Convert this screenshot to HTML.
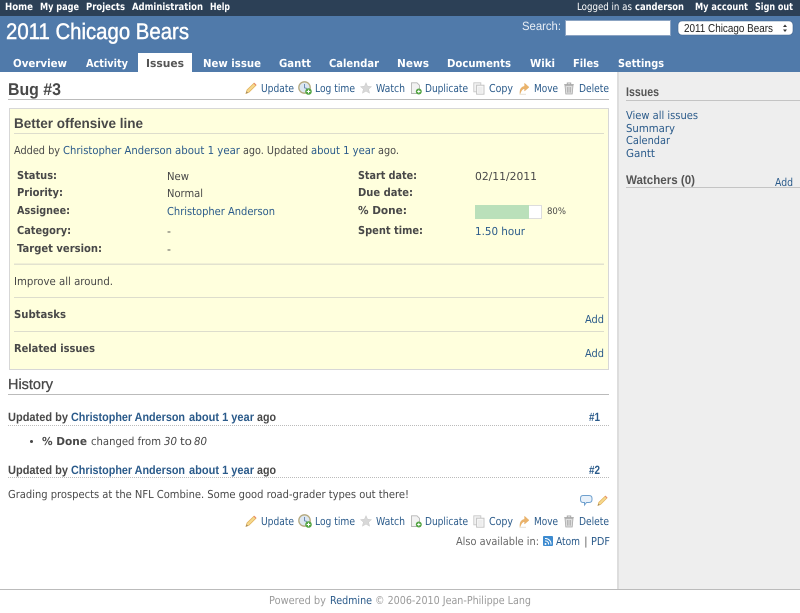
<!DOCTYPE html>
<html><head><meta charset="utf-8"><title>Bug #3</title>
<style>
html,body{margin:0;padding:0;background:#fff;width:800px;height:613px;overflow:hidden}
svg{display:block}
text{font-family:"DejaVu Sans",Verdana,sans-serif;font-size:11px;fill:#484848;white-space:pre;text-rendering:geometricPrecision}
.l{fill:#2A5A8A}
.b{font-weight:bold}
.t{fill:#fff;font-weight:bold;font-size:10px}
.m{fill:#fff;font-weight:bold;font-size:11px}
.h{font-family:"Liberation Sans",Arial,sans-serif;font-weight:bold}
.k{fill:#484848;font-weight:bold}
.u{font-family:"Liberation Sans",Arial,sans-serif;font-weight:bold;font-size:12px;fill:#484848}
.ul{font-family:"Liberation Sans",Arial,sans-serif;font-weight:bold;font-size:12px;fill:#2A5A8A}
</style></head><body>
<svg width="800" height="613" viewBox="0 0 800 613" xmlns="http://www.w3.org/2000/svg">
<defs>
<symbol id="pen" viewBox="0 0 12 12"><path d="M1 11.5 L2 8 L9 1.2 L11 3.2 L4 10.2 Z" fill="#F6D98E" stroke="#E3B25C" stroke-width=".8"/><path d="M8.6 1.6 L9.4 .8 L11.4 2.8 L10.6 3.6 Z" fill="#E88A6A"/><path d="M1 11.5 L1.6 9.4 L3 10.8 Z" fill="#8f8068"/></symbol>
<symbol id="clk" viewBox="0 0 14 14"><circle cx="6.5" cy="6.5" r="5.7" fill="#DCE6F0" stroke="#B5A97E" stroke-width="1.3"/><path d="M6.5 3 V6.8 L9 7.5" fill="none" stroke="#6C8DB3" stroke-width="1"/><circle cx="10.5" cy="10.5" r="3.3" fill="#54A544"/><path d="M10.5 8.7 V12.3 M8.7 10.5 H12.3" stroke="#fff" stroke-width="1"/></symbol>
<symbol id="star" viewBox="0 0 12 12"><path d="M6 .6 L7.6 4.3 L11.6 4.6 L8.6 7.2 L9.6 11.2 L6 9.1 L2.4 11.2 L3.4 7.2 L.4 4.6 L4.4 4.3 Z" fill="#D8D8D8" stroke="#C8C8C8" stroke-width=".5"/></symbol>
<symbol id="dup" viewBox="0 0 12 13"><path d="M1.5 .8 H7 L9.5 3.3 V11.5 H1.5 Z" fill="#F2F2F2" stroke="#B5B5B5" stroke-width=".9"/><circle cx="8.8" cy="9.5" r="3" fill="#54A544"/><path d="M8.8 7.9 V11.1 M7.2 9.5 H10.4" stroke="#fff" stroke-width=".9"/></symbol>
<symbol id="copy" viewBox="0 0 12 13"><rect x=".8" y=".8" width="7" height="9" fill="#F2F2F2" stroke="#C8C8C8" stroke-width=".9"/><rect x="3.6" y="3.2" width="7.4" height="9" fill="#F7F7F7" stroke="#C0C0C0" stroke-width=".9"/><path d="M5 6 H9.5 M5 8 H9.5 M5 10 H9.5" stroke="#DDD" stroke-width=".7"/></symbol>
<symbol id="mv" viewBox="0 0 12 13"><path d="M2 12 C1.5 7 3.5 4.6 6.6 4.4 V1.2 L11 5.2 L6.6 9 V6.6 C4.5 6.8 3.2 8.6 2 12 Z" fill="#EBB36B" stroke="#E0A455" stroke-width=".4"/><path d="M1.5 12.3 H8" stroke="#E5E0D5" stroke-width="1"/></symbol>
<symbol id="tr" viewBox="0 0 12 13"><path d="M1.2 2.6 H10.8 M4.3 2.4 V1 H7.7 V2.4" fill="none" stroke="#A8A8A8" stroke-width="1"/><path d="M2 3.4 H10 L9.2 12 H2.8 Z" fill="#DEDEDE" stroke="#A8A8A8" stroke-width=".8"/><path d="M4.4 5 V10.6 M6 5 V10.6 M7.6 5 V10.6" stroke="#A5A5A5" stroke-width=".7"/></symbol>
</defs>

<!-- base areas -->
<rect width="800" height="613" fill="#fff"/>
<rect x="618" y="72" width="182" height="517" fill="#EEEEEE"/>
<rect x="617" y="72" width="2" height="517" fill="#DDDDDD"/>
<rect width="800" height="16" fill="#2C4056"/>
<rect y="16" width="800" height="56" fill="#507AAA"/>

<!-- top menu -->
<text class="t" x="5" y="10" textLength="28" lengthAdjust="spacingAndGlyphs">Home</text>
<text class="t" x="40" y="10" textLength="39" lengthAdjust="spacingAndGlyphs">My page</text>
<text class="t" x="86" y="10" textLength="39" lengthAdjust="spacingAndGlyphs">Projects</text>
<text class="t" x="132" y="10" textLength="71" lengthAdjust="spacingAndGlyphs">Administration</text>
<text class="t" x="210" y="10" textLength="20" lengthAdjust="spacingAndGlyphs">Help</text>
<text x="577" y="10" style="fill:#fff;font-size:10px" textLength="55" lengthAdjust="spacingAndGlyphs">Logged in as</text>
<text class="t" x="635" y="10" textLength="49" lengthAdjust="spacingAndGlyphs">canderson</text>
<text class="t" x="695" y="10" textLength="53" lengthAdjust="spacingAndGlyphs">My account</text>
<text class="t" x="755" y="10" textLength="38" lengthAdjust="spacingAndGlyphs">Sign out</text>

<!-- header -->
<text x="6" y="39" style="fill:#fff;stroke:#fff;stroke-width:.45;font-family:'Liberation Sans',Arial,sans-serif;font-size:22.5px" textLength="183" lengthAdjust="spacingAndGlyphs">2011 Chicago Bears</text>
<text x="522" y="30" style="fill:#E8EEF5;font-family:'Liberation Sans',Arial,sans-serif;font-size:12px" textLength="39" lengthAdjust="spacingAndGlyphs">Search:</text>
<rect x="565.5" y="20.5" width="105" height="15" fill="#fff" stroke="#8BA3C2"/>
<rect x="678" y="21" width="115" height="14" rx="4" fill="#fff" stroke="#3F628D" stroke-width=".6"/>
<text x="684" y="32" style="fill:#222;font-family:'Liberation Sans',Arial,sans-serif;font-size:11.5px" textLength="89" lengthAdjust="spacingAndGlyphs">2011 Chicago Bears</text>
<path d="M783 27 L785 24.5 L787 27 Z M783 29.5 L785 32 L787 29.5 Z" fill="#333"/>

<!-- tabs -->
<rect x="138" y="53" width="54" height="19" fill="#fff"/>
<text class="m" x="13" y="67" textLength="54" lengthAdjust="spacingAndGlyphs">Overview</text>
<text class="m" x="86" y="67" textLength="42" lengthAdjust="spacingAndGlyphs">Activity</text>
<text class="m" x="146" y="67" style="fill:#555" textLength="38" lengthAdjust="spacingAndGlyphs">Issues</text>
<text class="m" x="203" y="67" textLength="58" lengthAdjust="spacingAndGlyphs">New issue</text>
<text class="m" x="279" y="67" textLength="32" lengthAdjust="spacingAndGlyphs">Gantt</text>
<text class="m" x="329" y="67" textLength="50" lengthAdjust="spacingAndGlyphs">Calendar</text>
<text class="m" x="397" y="67" textLength="32" lengthAdjust="spacingAndGlyphs">News</text>
<text class="m" x="447" y="67" textLength="64" lengthAdjust="spacingAndGlyphs">Documents</text>
<text class="m" x="530" y="67" textLength="25" lengthAdjust="spacingAndGlyphs">Wiki</text>
<text class="m" x="573" y="67" textLength="26" lengthAdjust="spacingAndGlyphs">Files</text>
<text class="m" x="618" y="67" textLength="46" lengthAdjust="spacingAndGlyphs">Settings</text>

<!-- title row -->
<text class="h" x="8" y="95" style="font-size:17px;fill:#484848" textLength="53" lengthAdjust="spacingAndGlyphs">Bug #3</text>
<rect x="8" y="99" width="601" height="1" fill="#BBBBBB"/>
<g id="ctx">
<use href="#pen" x="245" y="82" width="12" height="12"/>
<text class="l" x="261" y="92" textLength="33" lengthAdjust="spacingAndGlyphs">Update</text>
<use href="#clk" x="298" y="81" width="14" height="14"/>
<text class="l" x="315" y="92" textLength="40" lengthAdjust="spacingAndGlyphs">Log time</text>
<use href="#star" x="360" y="82" width="12" height="12"/>
<text class="l" x="376" y="92" textLength="29" lengthAdjust="spacingAndGlyphs">Watch</text>
<use href="#dup" x="410" y="82" width="12" height="13"/>
<text class="l" x="425" y="92" textLength="43" lengthAdjust="spacingAndGlyphs">Duplicate</text>
<use href="#copy" x="473" y="82" width="12" height="13"/>
<text class="l" x="489" y="92" textLength="24" lengthAdjust="spacingAndGlyphs">Copy</text>
<use href="#mv" x="518" y="82" width="12" height="13"/>
<text class="l" x="534" y="92" textLength="24" lengthAdjust="spacingAndGlyphs">Move</text>
<use href="#tr" x="563" y="82" width="12" height="13"/>
<text class="l" x="579" y="92" textLength="30" lengthAdjust="spacingAndGlyphs">Delete</text>
</g>

<!-- issue box -->
<rect x="9.5" y="108.5" width="599" height="261" fill="#FFFFDD" stroke="#D7D7D7"/>
<text class="h" x="14" y="128" style="font-size:14px;fill:#484848" textLength="129" lengthAdjust="spacingAndGlyphs">Better offensive line</text>
<rect x="14" y="133" width="590" height="1" fill="#DDDDCC"/>
<text x="14" y="154" textLength="46" lengthAdjust="spacingAndGlyphs">Added by</text>
<text class="l" x="63" y="154" textLength="109" lengthAdjust="spacingAndGlyphs">Christopher Anderson</text>
<text class="l" x="175" y="154" textLength="65" lengthAdjust="spacingAndGlyphs">about 1 year</text>
<text x="243" y="154" textLength="65" lengthAdjust="spacingAndGlyphs">ago. Updated</text>
<text class="l" x="311" y="154" textLength="64" lengthAdjust="spacingAndGlyphs">about 1 year</text>
<text x="378" y="154" textLength="21" lengthAdjust="spacingAndGlyphs">ago.</text>

<text class="k" x="17" y="179" textLength="40" lengthAdjust="spacingAndGlyphs">Status:</text>
<text x="167" y="180" textLength="22" lengthAdjust="spacingAndGlyphs">New</text>
<text class="k" x="17" y="196" textLength="46" lengthAdjust="spacingAndGlyphs">Priority:</text>
<text x="167" y="197" textLength="36" lengthAdjust="spacingAndGlyphs">Normal</text>
<text class="k" x="17" y="214" textLength="53" lengthAdjust="spacingAndGlyphs">Assignee:</text>
<text class="l" x="167" y="215" textLength="108" lengthAdjust="spacingAndGlyphs">Christopher Anderson</text>
<text class="k" x="17" y="234" textLength="54" lengthAdjust="spacingAndGlyphs">Category:</text>
<text x="167" y="235">-</text>
<text class="k" x="17" y="252" textLength="85" lengthAdjust="spacingAndGlyphs">Target version:</text>
<text x="167" y="253">-</text>

<text class="k" x="358" y="179" textLength="59" lengthAdjust="spacingAndGlyphs">Start date:</text>
<text x="475" y="180" textLength="62" lengthAdjust="spacingAndGlyphs">02/11/2011</text>
<text class="k" x="358" y="196" textLength="55" lengthAdjust="spacingAndGlyphs">Due date:</text>
<text class="k" x="358" y="214" textLength="49" lengthAdjust="spacingAndGlyphs">% Done:</text>
<rect x="475.5" y="205.5" width="66" height="13" fill="#fff" stroke="#DDDDDD"/>
<rect x="475" y="205" width="54" height="14" fill="#BAE0BA"/>
<text x="547" y="214" style="font-size:9px" textLength="19" lengthAdjust="spacingAndGlyphs">80%</text>
<text class="k" x="358" y="234" textLength="65" lengthAdjust="spacingAndGlyphs">Spent time:</text>
<text class="l" x="475" y="235" textLength="50" lengthAdjust="spacingAndGlyphs">1.50 hour</text>

<rect x="14" y="263.5" width="590" height="1.5" fill="#E2E2CF"/>
<text x="14" y="285" textLength="99" lengthAdjust="spacingAndGlyphs">Improve all around.</text>
<rect x="14" y="297" width="590" height="1" fill="#DDDDCC"/>
<text class="k" x="14" y="318" textLength="52" lengthAdjust="spacingAndGlyphs">Subtasks</text>
<text class="l" x="585" y="323" textLength="19" lengthAdjust="spacingAndGlyphs">Add</text>
<rect x="14" y="331" width="590" height="1" fill="#DDDDCC"/>
<text class="k" x="14" y="352" textLength="81" lengthAdjust="spacingAndGlyphs">Related issues</text>
<text class="l" x="585" y="357" textLength="19" lengthAdjust="spacingAndGlyphs">Add</text>

<!-- history -->
<text class="h" x="8" y="389" style="font-size:14.5px;font-weight:normal;stroke:#484848;stroke-width:.3;fill:#484848" textLength="45" lengthAdjust="spacingAndGlyphs">History</text>
<rect x="8" y="394" width="601" height="1" fill="#BBBBBB"/>

<text class="u" x="8" y="421" textLength="60" lengthAdjust="spacingAndGlyphs">Updated by</text>
<text class="ul" x="71" y="421" textLength="114" lengthAdjust="spacingAndGlyphs">Christopher Anderson</text>
<text class="ul" x="189" y="421" textLength="65" lengthAdjust="spacingAndGlyphs">about 1 year</text>
<text class="u" x="257" y="421" textLength="19" lengthAdjust="spacingAndGlyphs">ago</text>
<text class="ul" x="589" y="421" textLength="11" lengthAdjust="spacingAndGlyphs">#1</text>
<line x1="8" y1="425.5" x2="609" y2="425.5" stroke="#BBBBBB" stroke-dasharray="1 1"/>
<circle cx="31.5" cy="441.5" r="1.5" fill="#484848"/>
<text class="k" x="42" y="445" textLength="45" lengthAdjust="spacingAndGlyphs">% Done</text>
<text x="91" y="445" textLength="70" lengthAdjust="spacingAndGlyphs">changed from</text>
<text x="164" y="445" style="font-style:italic" textLength="13" lengthAdjust="spacingAndGlyphs">30</text>
<text x="180" y="445" textLength="12" lengthAdjust="spacingAndGlyphs">to</text>
<text x="194" y="445" style="font-style:italic" textLength="13" lengthAdjust="spacingAndGlyphs">80</text>

<text class="u" x="8" y="474" textLength="60" lengthAdjust="spacingAndGlyphs">Updated by</text>
<text class="ul" x="71" y="474" textLength="114" lengthAdjust="spacingAndGlyphs">Christopher Anderson</text>
<text class="ul" x="189" y="474" textLength="65" lengthAdjust="spacingAndGlyphs">about 1 year</text>
<text class="u" x="257" y="474" textLength="19" lengthAdjust="spacingAndGlyphs">ago</text>
<text class="ul" x="589" y="474" textLength="11" lengthAdjust="spacingAndGlyphs">#2</text>
<line x1="8" y1="477.5" x2="609" y2="477.5" stroke="#BBBBBB" stroke-dasharray="1 1"/>
<text x="8" y="498" textLength="401" lengthAdjust="spacingAndGlyphs">Grading prospects at the NFL Combine. Some good road-grader types out there!</text>

<path d="M583 495.5 H589 Q592 495.5 592 498.5 V499.5 Q592 502.5 589 502.5 H586.5 L584.5 505 V502.5 H583 Q580.5 502.5 580.5 499.5 V498.5 Q580.5 495.5 583 495.5 Z" fill="#E8F1FA" stroke="#6FA0CE" stroke-width="1"/>
<use href="#pen" x="597" y="495" width="11" height="11"/>

<use href="#ctx" y="433"/>

<text x="456" y="545" style="fill:#666" textLength="83" lengthAdjust="spacingAndGlyphs">Also available in:</text>
<rect x="543" y="536" width="10" height="10" rx="1" fill="#3D8BD0"/>
<path d="M545 538.5 A5.5 5.5 0 0 1 551 544.5 M545 541 A3 3 0 0 1 548.5 544.5" fill="none" stroke="#fff" stroke-width="1"/>
<circle cx="545.5" cy="544" r="1" fill="#fff"/>
<text class="l" x="556" y="545" textLength="24" lengthAdjust="spacingAndGlyphs">Atom</text>
<text x="584" y="545" style="fill:#666">|</text>
<text class="l" x="591" y="545" textLength="19" lengthAdjust="spacingAndGlyphs">PDF</text>

<!-- footer -->
<rect y="589" width="800" height="1" fill="#BBBBBB"/>
<text x="269" y="604" style="fill:#9A9A9A" textLength="57" lengthAdjust="spacingAndGlyphs">Powered by</text>
<text class="l" x="330" y="604" textLength="42" lengthAdjust="spacingAndGlyphs">Redmine</text>
<text x="375" y="604" style="fill:#9A9A9A" textLength="156" lengthAdjust="spacingAndGlyphs">© 2006-2010 Jean-Philippe Lang</text>

<!-- sidebar -->
<text class="h" x="626" y="96" style="font-size:12.5px;fill:#555" textLength="33" lengthAdjust="spacingAndGlyphs">Issues</text>
<rect x="626" y="100" width="174" height="1" fill="#C4C4C4"/>
<text class="l" x="626" y="119" textLength="72" lengthAdjust="spacingAndGlyphs">View all issues</text>
<text class="l" x="626" y="132" textLength="49" lengthAdjust="spacingAndGlyphs">Summary</text>
<text class="l" x="626" y="144" textLength="44" lengthAdjust="spacingAndGlyphs">Calendar</text>
<text class="l" x="626" y="157" textLength="29" lengthAdjust="spacingAndGlyphs">Gantt</text>
<text class="h" x="626" y="184" style="font-size:12.5px;fill:#555" textLength="69" lengthAdjust="spacingAndGlyphs">Watchers (0)</text>
<text class="l" x="775" y="186" textLength="18" lengthAdjust="spacingAndGlyphs">Add</text>
<rect x="626" y="187" width="174" height="1" fill="#C4C4C4"/>
</svg>
</body></html>
